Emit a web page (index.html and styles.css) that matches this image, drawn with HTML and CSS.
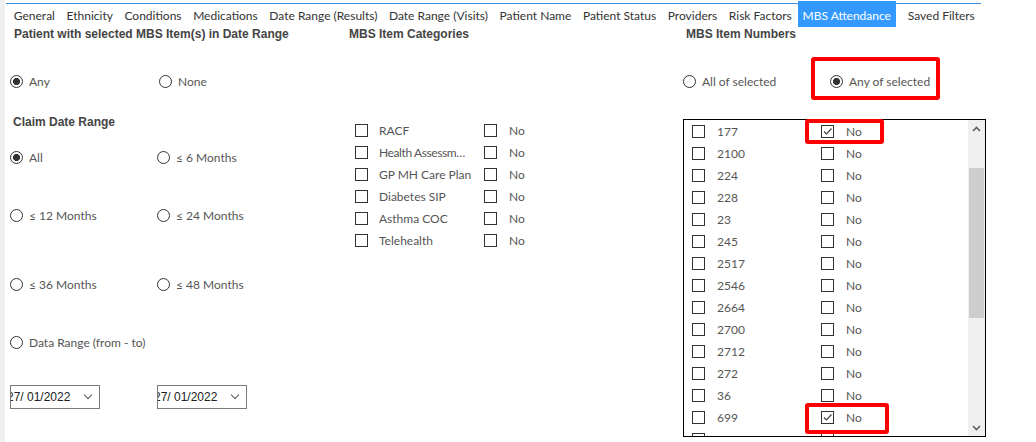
FILE: index.html
```html
<!DOCTYPE html>
<html>
    <head>
        <title>MBS Attendance</title>
        <meta name="viewport" content="width=device-width, initial-scale=1">
        <link rel="stylesheet" href="styles.css">
    </head>
    <body>
        <div class="page">
            <nav class="tabs">
                <span class="tab">General</span>
                <span class="tab">Ethnicity</span>
                <span class="tab">Conditions</span>
                <span class="tab">Medications</span>
                <span class="tab">Date Range (Results)</span>
                <span class="tab">Date Range (Visits)</span>
                <span class="tab">Patient Name</span>
                <span class="tab">Patient Status</span>
                <span class="tab">Providers</span>
                <span class="tab">Risk Factors</span>
                <span class="tab active">MBS Attendance</span>
                <span class="tab">Saved Filters</span>
            </nav>

            <div class="content">
                <!-- date range column -->
                <section class="col col-range">
                    <h2 class="heading">Patient with selected MBS Item(s) in Date Range</h2>
                    <div class="pair top-row">
                        <label class="radio checked">Any</label>
                        <label class="radio none">None</label>
                    </div>
                    <h2 class="heading sub">Claim Date Range</h2>
                    <div class="pair r1">
                        <label class="radio checked">All</label>
                        <label class="radio">≤ 6 Months</label>
                    </div>
                    <div class="pair r2">
                        <label class="radio">≤ 12 Months</label>
                        <label class="radio">≤ 24 Months</label>
                    </div>
                    <div class="pair r3">
                        <label class="radio">≤ 36 Months</label>
                        <label class="radio">≤ 48 Months</label>
                    </div>
                    <div class="pair r4">
                        <label class="radio">Data Range (from - to)</label>
                    </div>
                    <div class="pair dates">
                        <div class="datepick"><span class="date-text">27/ 01/2022</span><span class="chev"></span></div>
                        <div class="datepick"><span class="date-text">27/ 01/2022</span><span class="chev"></span></div>
                    </div>
                </section>

                <!-- categories column -->
                <section class="col col-cats">
                    <h2 class="heading">MBS Item Categories</h2>
                    <ul class="cat-list">
                        <li class="cat-row"><span class="box"></span><span class="cat-name">RACF</span><span class="box"></span><span class="no">No</span></li>
                        <li class="cat-row"><span class="box"></span><span class="cat-name tight">Health Assessm…</span><span class="box"></span><span class="no">No</span></li>
                        <li class="cat-row"><span class="box"></span><span class="cat-name">GP MH Care Plan</span><span class="box"></span><span class="no">No</span></li>
                        <li class="cat-row"><span class="box"></span><span class="cat-name">Diabetes SIP</span><span class="box"></span><span class="no">No</span></li>
                        <li class="cat-row"><span class="box"></span><span class="cat-name">Asthma COC</span><span class="box"></span><span class="no">No</span></li>
                        <li class="cat-row"><span class="box"></span><span class="cat-name">Telehealth</span><span class="box"></span><span class="no">No</span></li>
                    </ul>
                </section>

                <!-- item numbers column -->
                <section class="col col-items">
                    <h2 class="heading">MBS Item Numbers</h2>
                    <div class="pair top-row match">
                        <label class="radio">All of selected</label>
                        <label class="radio checked any-sel">Any of selected</label>
                        <span class="mark mark-match"></span>
                    </div>
                    <div class="listbox">
                        <ul class="item-list" id="item-list"></ul>
                        <div class="scrollbar">
                            <span class="sb-btn">
                                <svg width="9" height="6" viewBox="0 0 9 6"><path d="M1 5 L4.5 1.5 L8 5" fill="none" stroke="#606060" stroke-width="1.6"/></svg>
                            </span>
                            <span class="sb-thumb"></span>
                            <span class="sb-fill"></span>
                            <span class="sb-btn">
                                <svg width="9" height="6" viewBox="0 0 9 6"><path d="M1 1 L4.5 4.5 L8 1" fill="none" stroke="#606060" stroke-width="1.6"/></svg>
                            </span>
                        </div>
                        <span class="mark mark-177"></span>
                        <span class="mark mark-699"></span>
                    </div>
                </section>
            </div>
        </div>

        <script>
            // last entry is the row cut off by the list's bottom edge
            const items = ["177", "2100", "224", "228", "23", "245", "2517", "2546", "2664", "2700", "2712", "272", "36", "699", ""];
            const checked = ["177", "699"];
            const tick = '<svg width="11" height="11" viewBox="0 0 11 11"><path d="M2 5.5 L4.5 8 L9.5 2.5" fill="none" stroke="#444" stroke-width="1.2"/></svg>';
            const list = document.getElementById("item-list");

            items.forEach(function(num) {
                const li = document.createElement("li");
                li.className = "item-row";
                const on = checked.indexOf(num) !== -1;
                li.innerHTML = '<span class="box"></span><span class="item-num">' + num + '</span>' +
                    '<span class="box">' + (on ? tick : "") + '</span><span class="no">' + (num ? "No" : "") + '</span>';
                list.appendChild(li);
            });
        </script>
    </body>
</html>
```
FILE: styles.css
```css
body, html {
    margin: 0;
    background-color: white;
    font-family: Lato, "Liberation Sans", sans-serif;
    font-size: 12px;
    color: #555;
}

.page {
    border-left: 5px solid #f0f0f0;
    height: 442px;
    box-sizing: border-box;
    padding-top: 3px;
}

.tabs {
    display: flex;
    width: 975px;
    height: 24px;
    margin-left: 1px;
    border-top: 1px solid #3c8fe0;
    padding-left: 2px;
    box-sizing: border-box;
    align-items: center;
    color: #333;
}

.tab {
    padding: 0 5.8px;
    white-space: nowrap;
}

.tab.active {
    background-color: #3399ff;
    color: white;
    align-self: stretch;
    margin: -3px 6px 0 0;
    padding: 3px 5px 0;
    display: flex;
    align-items: center;
}

.content {
    display: flex;
    padding-left: 5px;
}

.col {
    display: flex;
    flex-direction: column;
}

.col-range {
    width: 339px;
}

.col-cats {
    width: 334px;
}

.col-items {
    width: 330px;
}

.heading {
    margin: 0;
    font-family: "Liberation Sans", Arial, sans-serif;
    font-weight: bold;
    font-size: 12px;
    line-height: 14px;
    height: 14px;
    color: #444;
}

.col-range .heading {
    padding-left: 4px;
}

.col-items .heading {
    padding-left: 3px;
}

.heading.sub {
    margin-top: 24px;
    padding-left: 3px;
}

.pair {
    display: flex;
    height: 20px;
    align-items: center;
}

.pair .radio:first-child {
    width: 147px;
}

.top-row {
    margin-top: 30px;
}

.top-row .none {
    margin-left: 2px;
}

.r1 { margin-top: 18px; }
.r2 { margin-top: 38px; }
.r3 { margin-top: 49px; }
.r4 { margin-top: 38px; }

.radio {
    display: flex;
    align-items: center;
    white-space: nowrap;
}

.radio::before {
    content: "";
    width: 11px;
    height: 11px;
    border: 1px solid #333;
    border-radius: 50%;
    margin-right: 6px;
    flex: none;
}

.radio.checked::before {
    background: radial-gradient(circle, #333 0 3.3px, white 3.8px);
}

.dates {
    margin-top: 33px;
    height: 24px;
}

.datepick {
    width: 90px;
    height: 24px;
    box-sizing: border-box;
    border: 1px solid #7a7a7a;
    display: flex;
    align-items: center;
    overflow: hidden;
    margin-right: 57px;
    color: #222;
}

.date-text {
    margin-left: -4px;
    width: 78px;
    flex: none;
    font-family: "Liberation Sans", Arial, sans-serif;
    font-size: 12px;
}

.chev {
    width: 5px;
    height: 5px;
    border-right: 1px solid #555;
    border-bottom: 1px solid #555;
    transform: rotate(45deg);
    margin-top: -4px;
}

.cat-list, .item-list {
    list-style: none;
    margin: 0;
    padding: 0;
}

.cat-list {
    margin-top: 78px;
}

.cat-row, .item-row {
    display: flex;
    align-items: center;
    height: 22px;
}

.cat-row .box:first-child {
    margin-left: 6px;
}

.box {
    width: 11px;
    height: 11px;
    border: 1px solid #333;
    flex: none;
    display: flex;
    align-items: center;
    justify-content: center;
}

.cat-name {
    margin-left: 11px;
    width: 105px;
    white-space: nowrap;
}

.cat-name.tight {
    letter-spacing: -0.4px;
}

.no {
    margin-left: 12px;
}

.match {
    position: relative;
}

.mark {
    position: absolute;
    border: 4px solid #f00;
    border-radius: 3px;
    box-sizing: border-box;
}

.mark-match {
    left: 128px;
    top: -14px;
    width: 129px;
    height: 43px;
}

.listbox {
    position: relative;
    margin-top: 28px;
    width: 303px;
    height: 318px;
    box-sizing: border-box;
    border: 1px solid #000;
    display: flex;
}

.item-list {
    flex: 1;
    overflow: hidden;
}

.item-row .box:first-child {
    margin-left: 8px;
}

.item-num {
    margin-left: 12px;
    width: 104px;
}

.scrollbar {
    width: 17px;
    background-color: #f0f0f0;
    display: flex;
    flex-direction: column;
}

.sb-btn {
    height: 17px;
    display: flex;
    align-items: center;
    justify-content: center;
    flex: none;
}

.sb-thumb {
    margin: 31px 1px 0;
    height: 150px;
    background-color: #cdcdcd;
    flex: none;
}

.sb-fill {
    flex: 1;
}

.mark-177 {
    left: 121px;
    top: -1px;
    width: 79px;
    height: 25px;
}

.mark-699 {
    left: 121px;
    top: 283px;
    width: 84px;
    height: 31px;
}
```
